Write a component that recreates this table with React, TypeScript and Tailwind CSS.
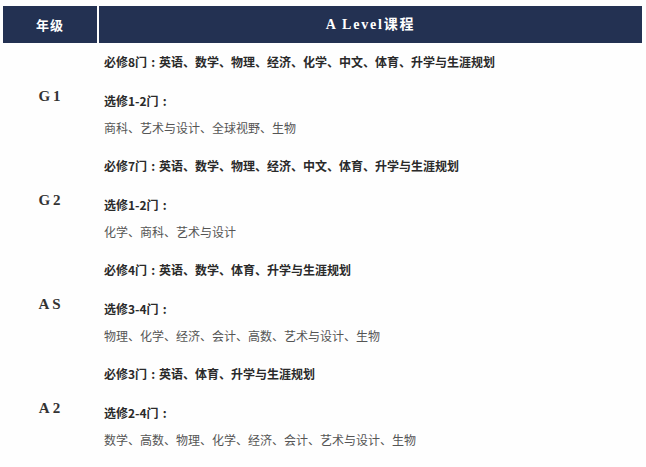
import React from "react";

const rows = [
  {
    g: "G1",
    req: ["必修8门", "英语、数学、物理、经济、化学、中文、体育、升学与生涯规划"],
    el: "选修1-2门",
    list: "商科、艺术与设计、全球视野、生物",
  },
  {
    g: "G2",
    req: ["必修7门", "英语、数学、物理、经济、中文、体育、升学与生涯规划"],
    el: "选修1-2门",
    list: "化学、商科、艺术与设计",
  },
  {
    g: "AS",
    req: ["必修4门", "英语、数学、体育、升学与生涯规划"],
    el: "选修3-4门",
    list: "物理、化学、经济、会计、高数、艺术与设计、生物",
  },
  {
    g: "A2",
    req: ["必修3门", "英语、体育、升学与生涯规划"],
    el: "选修2-4门",
    list: "数学、高数、物理、化学、经济、会计、艺术与设计、生物",
  },
];

const cjk = { fontFamily: '"Noto Sans CJK SC", "Noto Sans", sans-serif' };
const serif = { fontFamily: '"Liberation Serif", "Noto Sans CJK SC", serif' };

function Colon() {
  return <span className="inline-block w-[12px] text-center">:</span>;
}

export default function App() {
  return (
    <div className="w-[646px] h-[467px] bg-[#fefefe] overflow-hidden">
      <div className="ml-[3px] mt-[6px] w-[639px]">
        <div className="flex h-[37px] gap-[2px]">
          <div
            className="w-[94px] bg-[#233152] flex items-center justify-center text-white text-[13px] font-bold tracking-[1px]"
            style={cjk}
          >
            年级
          </div>
          <div
            className="flex-1 bg-[#233152] flex items-center justify-center text-white text-[14px] font-bold tracking-[1.8px]"
            style={serif}
          >
            A Level课程
          </div>
        </div>
        {rows.map((r) => (
          <div key={r.g} className="flex h-[104px]">
            <div
              className="w-[96px] flex items-center justify-center text-[15px] font-bold text-[#333] tracking-[3px] pt-[3px]"
              style={serif}
            >
              {r.g}
            </div>
            <div className="flex-1 pl-[5px] pt-[9px] flex flex-col text-[12px] leading-[20px]" style={cjk}>
              <div className="font-bold text-[#2a2a2a]">
                {r.req[0]}
                <Colon />
                {r.req[1]}
              </div>
              <div className="font-bold text-[#2a2a2a] mt-[19px]">
                {r.el}
                <Colon />
              </div>
              <div className="text-[#555] mt-[7px]">{r.list}</div>
            </div>
          </div>
        ))}
      </div>
    </div>
  );
}
